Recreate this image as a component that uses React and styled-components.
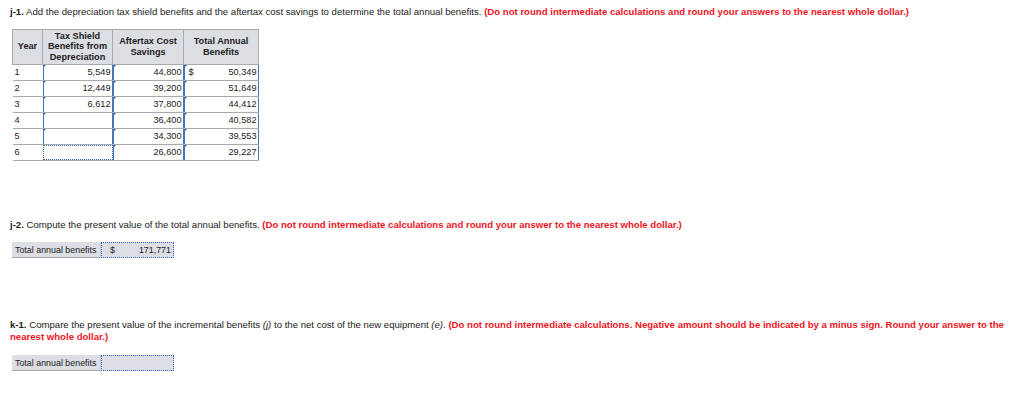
import React from 'react';
import styled, { createGlobalStyle } from 'styled-components';

const GlobalStyle = createGlobalStyle`
  body {
    margin: 0;
    background: #ffffff;
    font-family: 'Liberation Sans', Arial, sans-serif;
    color: #222;
  }
`;

const Page = styled.div`
  width: 1024px;
  height: 402px;
  padding: 6px 10px 0 10px;
  box-sizing: border-box;
`;

const Question = styled.p`
  margin: ${(p) => p.$top || 0}px 0 0 0;
  font-size: 9.6px;
  line-height: 11.5px;
  strong {
    font-weight: bold;
  }
  em {
    font-style: italic;
  }
`;

const Note = styled.span`
  color: #f0141e;
  font-weight: bold;
`;

const Table = styled.table`
  margin: 11px 0 0 2px;
  border-collapse: collapse;
  font-size: 9.2px;
  table-layout: fixed;
`;

const HeadCell = styled.th`
  width: ${(p) => p.$w}px;
  height: 34px;
  padding: 0 2px;
  background: #dddee4;
  border: 1px solid #a9aab0;
  font-weight: bold;
  line-height: 10.5px;
  text-align: center;
  vertical-align: middle;
  color: #222;
`;

const YearCell = styled.td`
  height: 15px;
  padding: 0 0 0 2px;
  border-bottom: 1px solid #a9aab0;
  vertical-align: middle;
`;

const InputCell = styled.td`
  height: 15px;
  padding: 0;
  border-bottom: 1px solid #a9aab0;
`;

const Field = styled.div`
  position: relative;
  height: 15px;
  box-sizing: border-box;
  border: ${(p) => (p.$focus ? '1.5px dotted #2f63b8' : '1.5px solid #4676b8')};
  border-top: ${(p) => (p.$focus ? '1.5px dotted #2f63b8' : '0')};
  border-bottom: ${(p) => (p.$focus ? '1.5px dotted #2f63b8' : '0')};
  background: #fff;
  display: flex;
  align-items: center;
  justify-content: ${(p) => (p.$dollar ? 'space-between' : 'flex-end')};
  padding: 0 1px 0 4px;
  line-height: 12px;
  &::before {
    content: '';
    display: ${(p) => (p.$focus ? 'none' : 'block')};
    position: absolute;
    left: 0;
    top: 0;
    width: 3px;
    height: 3px;
    background: #1f4f9c;
    clip-path: polygon(0 0, 100% 0, 0 100%);
  }
`;

const AnswerRow = styled.div`
  display: flex;
  margin: ${(p) => p.$top}px 0 0 2px;
  height: 16px;
  font-size: 8.9px;
`;

const AnswerLabel = styled.div`
  display: flex;
  align-items: center;
  width: 89px;
  padding-left: 3px;
  box-sizing: border-box;
  background: #dcdde5;
  border-bottom: 1px solid #a9aab0;
  border-right: 1px solid #c8c9cf;
`;

const AnswerInput = styled.div`
  display: flex;
  align-items: center;
  justify-content: space-between;
  width: 73px;
  box-sizing: border-box;
  padding: 0 2px 0 8px;
  border: 1.5px dotted #2f63b8;
  background: #dcdde5;
`;

const rows = [
  { year: 1, tax: '5,549', after: '44,800', total: '50,349', dollar: true },
  { year: 2, tax: '12,449', after: '39,200', total: '51,649' },
  { year: 3, tax: '6,612', after: '37,800', total: '44,412' },
  { year: 4, tax: '', after: '36,400', total: '40,582' },
  { year: 5, tax: '', after: '34,300', total: '39,553' },
  { year: 6, tax: '', after: '26,600', total: '29,227', focus: true },
];

export default function App() {
  return (
    <Page>
      <GlobalStyle />
      <Question>
        <strong>j-1.</strong> Add the depreciation tax shield benefits and the aftertax cost savings to determine the
        total annual benefits.{' '}
        <Note>(Do not round intermediate calculations and round your answers to the nearest whole dollar.)</Note>
      </Question>

      <Table>
        <thead>
          <tr>
            <HeadCell $w={25}>Year</HeadCell>
            <HeadCell $w={65}>
              Tax Shield
              <br />
              Benefits from
              <br />
              Depreciation
            </HeadCell>
            <HeadCell $w={66}>
              Aftertax Cost
              <br />
              Savings
            </HeadCell>
            <HeadCell $w={70}>
              Total Annual
              <br />
              Benefits
            </HeadCell>
          </tr>
        </thead>
        <tbody>
          {rows.map((r) => (
            <tr key={r.year}>
              <YearCell>{r.year}</YearCell>
              <InputCell>
                <Field $focus={r.focus}>{r.tax}</Field>
              </InputCell>
              <InputCell>
                <Field>{r.after}</Field>
              </InputCell>
              <InputCell>
                <Field $dollar={r.dollar}>
                  {r.dollar && <span>$</span>}
                  <span>{r.total}</span>
                </Field>
              </InputCell>
            </tr>
          ))}
        </tbody>
      </Table>

      <Question $top={58}>
        <strong>j-2.</strong> Compute the present value of the total annual benefits.{' '}
        <Note>(Do not round intermediate calculations and round your answer to the nearest whole dollar.)</Note>
      </Question>

      <AnswerRow $top={12}>
        <AnswerLabel>Total annual benefits</AnswerLabel>
        <AnswerInput>
          <span>$</span>
          <span>171,771</span>
        </AnswerInput>
      </AnswerRow>

      <Question $top={61}>
        <strong>k-1.</strong> Compare the present value of the incremental benefits <em>(j)</em> to the net cost of the
        new equipment <em>(e)</em>.{' '}
        <Note>
          (Do not round intermediate calculations. Negative amount should be indicated by a minus sign. Round your
          answer to the
        </Note>
        <br />
        <Note>nearest whole dollar.)</Note>
      </Question>

      <AnswerRow $top={13}>
        <AnswerLabel>Total annual benefits</AnswerLabel>
        <AnswerInput />
      </AnswerRow>
    </Page>
  );
}
